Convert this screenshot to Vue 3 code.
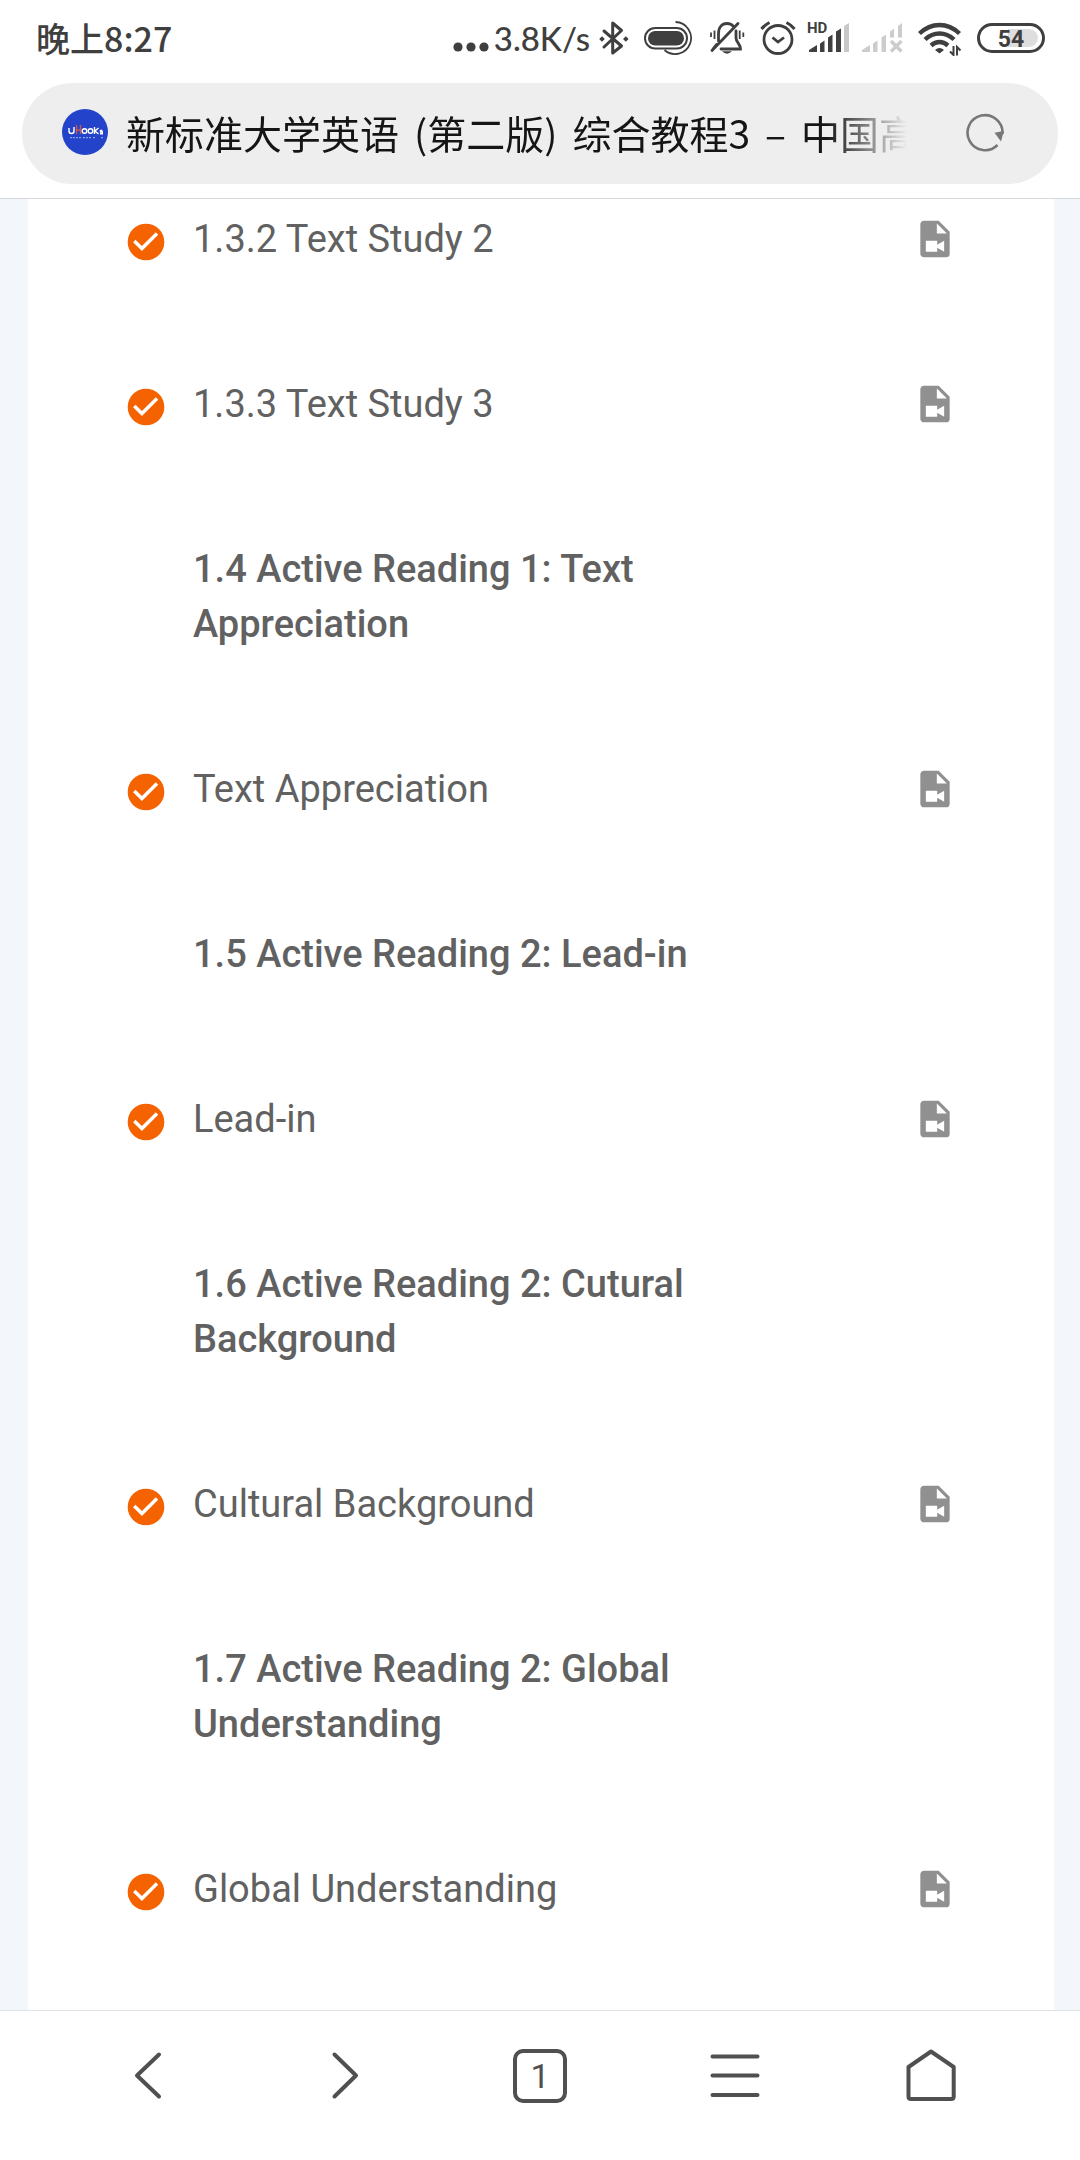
<script setup>
const titleParts = ['新标准大学英语', '(第二版)', '综合教程3', '–', '中国高']

const rows = [
  { title: '1.3.2 Text Study 2', lesson: true },
  { title: '1.3.3 Text Study 3', lesson: true },
  { title: '1.4 Active Reading 1: Text Appreciation' },
  { title: 'Text Appreciation', lesson: true },
  { title: '1.5 Active Reading 2: Lead-in' },
  { title: 'Lead-in', lesson: true },
  { title: '1.6 Active Reading 2: Cutural Background' },
  { title: 'Cultural Background', lesson: true },
  { title: '1.7 Active Reading 2: Global Understanding' },
  { title: 'Global Understanding', lesson: true },
]
</script>

<template>
  <div class="screen">
    <header class="top">
      <div class="status">
        <span class="clock">晚上8:27</span>
        <div class="indicators">
          <svg width="36" height="36" viewBox="453 20 36 36" fill="#3f3f3f">
            <circle cx="458" cy="47" r="4.6" /><circle cx="471" cy="47" r="4.6" /><circle cx="484" cy="47" r="4.6" />
          </svg>
          <span class="speed">3.8K/s</span>
          <svg width="30" height="36" viewBox="599 20 30 36" fill="none" stroke="#3f3f3f" stroke-width="3" stroke-linejoin="round" stroke-linecap="round">
            <path d="M604 31 621.500 46 612.700 53V23L621.500 30.500 604 47" />
            <path d="M602 36.300 604.800 39 602 41.700 599.200 39ZM625.800 36.300 628.600 39 625.800 41.700 623 39Z" fill="#3f3f3f" stroke="none" />
          </svg>
          <svg width="50" height="36" viewBox="645 20 50 36" fill="none" stroke="#3f3f3f">
            <rect x="646" y="28" width="42" height="20.500" rx="10.200" stroke-width="2" />
            <rect x="649" y="31" width="36" height="14.500" rx="7.200" fill="#3f3f3f" stroke="none" />
            <path d="M676.500 22a16 16 0 1 1-11 28" stroke-width="1.800" />
          </svg>
          <svg width="36" height="36" viewBox="709 20 36 36" fill="none" stroke="#3f3f3f" stroke-width="2.8" stroke-linecap="round">
            <path d="M718.500 41V33.500C718.500 27 722 23.500 727 23.500 730 23.500 732 24.500 733.500 26.500M736 31V38C736 42 740.500 44 740.500 49H721M712 50.500 738 23.500M713 49 716.500 44.500" />
            <path d="M714.500 30.500V39M739.700 30.500V39M711 32.500V37M743.300 32.500V37" stroke-width="1.800" stroke-linecap="butt" />
            <path d="M722 51.300H732Q727 56 722 51.300Z" fill="#3f3f3f" stroke="none" />
          </svg>
          <svg width="36" height="36" viewBox="760 20 36 36" fill="none" stroke="#3f3f3f" stroke-width="2.8">
            <circle cx="778" cy="39.500" r="14" />
            <path d="M772.500 37.500 778 42 784 37.500" />
            <path d="M761.500 29Q764.500 25 769.500 22.500M786.500 22.500Q791.500 25 794.500 29" stroke-width="3" />
          </svg>
          <svg class="cellular" width="43" height="36" viewBox="807 20 43 36" fill="#3f3f3f">
            <text x="807" y="33" font-size="15" font-weight="700" font-family="Roboto, sans-serif">HD</text>
            <path d="M809 50 817 45V52H809ZM820 43.500 824.500 40.500V52H820ZM828 37.500 832.500 34.500V52H828ZM836 31.500 841 28.500V52H836Z" />
            <path d="M844 26 849 23V52H844Z" fill="#c8c8c8" />
          </svg>
          <svg width="42" height="36" viewBox="862 20 42 36" fill="#cccccc">
            <path d="M863 50 871 45V52H863ZM874 43.500 878.500 40.500V52H874ZM882.500 37.500 887 34.500V52H882.500ZM891 31.500 895 28.500V37.500H891ZM899 26 903 23V37.500H899Z" />
            <path d="M892 41 902.500 51.500M902.500 41 892 51.500" stroke="#cccccc" stroke-width="3.400" />
          </svg>
          <svg width="44" height="36" viewBox="919 20 44 36" fill="none" stroke="#3f3f3f" stroke-width="4.400">
            <path d="M920.500 33.500Q929.500 25 940.500 25T960.500 33.500M926 39.500Q932.500 33.500 940.500 33.500T955 39.500M932 45.500Q936 42 940.500 42T949 45.500" />
            <path d="M936 50Q940.500 46 945 50L940.500 53.500Z" fill="#3f3f3f" stroke="none" />
            <path d="M954.500 46V55L951 51.500M958 55.500V47L961.500 50.500" stroke-width="2" />
          </svg>
          <svg width="69" height="36" viewBox="977 20 69 36">
            <path d="M1008 29H1029A9 9 0 0 1 1029 47H1008Z" fill="#dedede" />
            <rect x="978.500" y="24.500" width="65" height="27" rx="13.500" fill="none" stroke="#3f3f3f" stroke-width="3" />
            <text x="1011" y="46.500" text-anchor="middle" font-size="23" font-weight="700" fill="#3f3f3f" font-family="Roboto, sans-serif">54</text>
          </svg>
        </div>
      </div>
      <div class="address">
        <svg width="46" height="46" viewBox="0 0 46 46" aria-hidden="true">
          <circle cx="23" cy="23" r="23" fill="#2343cb" />
          <g fill="none" stroke="#fff" stroke-width="1.400">
            <path d="M7 19V22Q7 24.500 9.500 24.500T12 22V18" />
            <circle cx="22.500" cy="22" r="2.300" /><circle cx="28.500" cy="22" r="2.300" />
            <path d="M32.500 18V25M36.500 19 33 22 36.500 25M40.500 21.500H38.500V23H40.300V24.700H38" />
            <path d="M8 28.700H19M21 28.700H29M31 28.700H33M39 28.700H41" stroke-width="1" stroke-dasharray="2 1" stroke="#a9b6ee" />
          </g>
          <path d="M14.500 16V25M18.500 16V25M14.500 21H18.500" stroke="#d0584c" stroke-width="1.300" fill="none" />
        </svg>
        <button class="title" type="button">
          <span v-for="part in titleParts" :key="part">{{ part }}</span>
        </button>
        <button class="reload" type="button" aria-label="刷新">
          <svg width="40" height="40" viewBox="965 112 40 40" fill="none" stroke="#777" stroke-width="2.600">
            <path d="M997.500 145A17.500 17.500 0 1 1 1002.500 134" />
            <path d="M994.500 132.800 1003.800 131 1001 141.500Z" fill="#777" stroke="none" />
          </svg>
        </button>
      </div>
    </header>

    <main class="page">
      <ul class="card">
        <li v-for="row in rows" :key="row.title" class="row">
          <svg v-if="row.lesson" class="done" width="44" height="44" viewBox="0 0 24 24" aria-hidden="true">
            <circle cx="12" cy="12" r="10" fill="#f56200" />
            <path d="M5.600 11.400 9.800 15.600 18 7.400" fill="none" stroke="#fff" stroke-width="1.900" />
          </svg>
          <a v-if="row.lesson" class="name" href="#">{{ row.title }}</a>
          <h2 v-else class="name section">{{ row.title }}</h2>
          <svg v-if="row.lesson" class="video" width="44" height="44" viewBox="0 0 24 24" fill="#909090" aria-hidden="true">
            <path d="M13,9H18.500L13,3.500V9M6,2H14L20,8V20A2,2 0 0,1 18,22H6C4.890,22 4,21.100 4,20V4C4,2.890 4.890,2 6,2M17,19V13L13.200,15.200V13H7V19H13.200V16.800L17,19Z" />
          </svg>
        </li>
      </ul>
    </main>

    <nav class="toolbar">
      <button type="button" aria-label="后退">
        <svg width="56" height="56" viewBox="120 2048 56 56"><path d="M159 2054.500 137 2075.500 159 2096.500" /></svg>
      </button>
      <button type="button" aria-label="前进">
        <svg width="56" height="56" viewBox="316 2048 56 56"><path d="M334.500 2054.500 356 2075.500 334.500 2096.500" /></svg>
      </button>
      <button type="button"><span class="tabs">1</span></button>
      <button type="button" aria-label="菜单">
        <svg width="56" height="56" viewBox="708 2048 56 56"><path d="M712.500 2056.500H757.500M712.500 2075.500H757.500M712.500 2095H757.500" /></svg>
      </button>
      <button type="button" aria-label="主页">
        <svg width="56" height="56" viewBox="904 2048 56 56"><path d="M931 2051.500 953.700 2067V2096.500Q953.700 2099 951 2099H911Q908.500 2099 908.500 2096.500V2067Z" /></svg>
      </button>
    </nav>
  </div>
</template>

<style>
body {
  margin: 0;
  background: #fff;
}
</style>

<style scoped>
.screen {
  display: flex;
  flex-direction: column;
  min-height: 100vh;
  background: #fff;
  font-family: Roboto, "Noto Sans CJK SC", sans-serif;
}
button {
  padding: 0;
  border: 0;
  background: none;
  font: inherit;
  color: inherit;
}
svg {
  display: block;
  flex: none;
}
.top {
  padding: 0 22px 14px;
  border-bottom: 1px solid #d6d9dc;
}
.status {
  display: flex;
  align-items: center;
  justify-content: space-between;
  height: 76px;
  padding: 0 12px 7px 14px;
  color: #3f3f3f;
  font-family: "Noto Sans CJK SC", sans-serif;
  font-size: 34px;
  font-weight: 500;
  line-height: 48px;
}
.indicators {
  display: flex;
  align-items: center;
  gap: 15px;
}
.speed {
  margin: 0 -6px 0 -10px;
  font-family: Lato, sans-serif;
  font-size: 33px;
}
.cellular {
  margin: 0 -4px;
}
.address {
  display: flex;
  align-items: center;
  box-sizing: border-box;
  height: 101px;
  padding: 0 53px 3px 40px;
  border-radius: 51px;
  background: #eee;
}
.title {
  flex: 1;
  display: flex;
  gap: 15px;
  min-width: 0;
  margin: 0 58px 0 18px;
  overflow: hidden;
  color: #151515;
  font-family: "Noto Sans CJK SC", sans-serif;
  font-size: 39px;
  line-height: 60px;
  white-space: nowrap;
  -webkit-mask-image: linear-gradient(to left, transparent, #000 80px);
  mask-image: linear-gradient(to left, transparent, #000 80px);
}
.page {
  flex: 1;
  display: flex;
  padding: 0 26px 0 28px;
  background: #f3f7fb;
}
.card {
  flex: 1;
  display: flex;
  flex-direction: column;
  gap: 110px;
  margin: 0;
  padding: 13px 97px 93px 96px;
  list-style: none;
  background: #fff;
}
.row {
  display: grid;
  grid-template-columns: 44px 1fr 44px;
  align-items: start;
}
.done {
  margin-top: 8px;
}
.video {
  margin-top: 5px;
}
.name {
  grid-column: 2;
  margin: 0 60px 0 25px;
  color: #616161;
  font-size: 38px;
  font-weight: 400;
  line-height: 55px;
  text-decoration: none;
}
.section {
  font-weight: 500;
}
.toolbar {
  display: flex;
  padding: 0 50px 19px;
  border-top: 1px solid #e0e2e2;
  color: #505050;
}
.toolbar button {
  flex: 1;
  display: flex;
  align-items: center;
  justify-content: center;
  height: 130px;
}
.toolbar svg {
  fill: none;
  stroke: currentColor;
  stroke-width: 4;
  stroke-linecap: round;
  stroke-linejoin: round;
}
.tabs {
  width: 46px;
  height: 46px;
  border: 4px solid;
  border-radius: 10px;
  font-size: 34px;
  line-height: 46px;
}
</style>
